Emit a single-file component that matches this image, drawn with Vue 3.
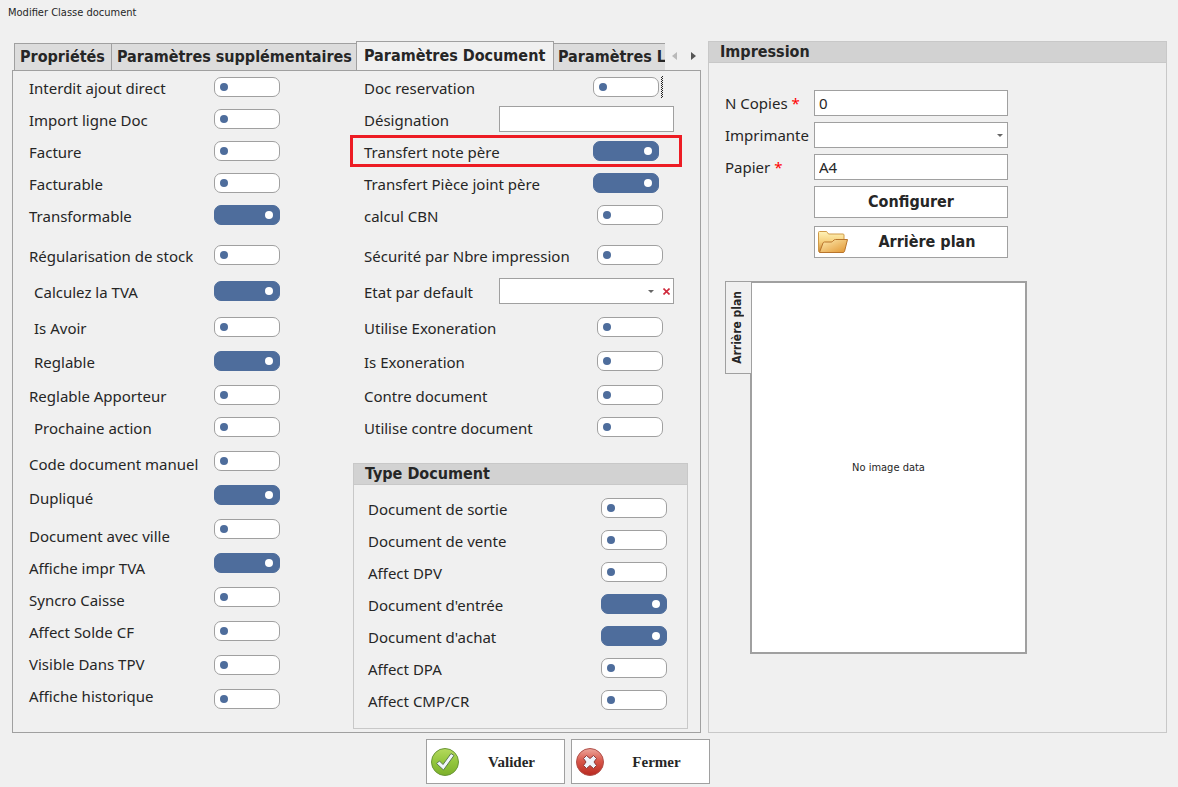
<script setup>
import { reactive } from 'vue'

const tabs = ['Propriétés', 'Paramètres supplémentaires', 'Paramètres Document', 'Paramètres L']
const activeTab = 'Paramètres Document'

const options = reactive([
  { label: 'Interdit ajout direct', on: false, labelGap: 0, gap: 0 },
  { label: 'Import ligne Doc', on: false, labelGap: 12, gap: 12 },
  { label: 'Facture', on: false, labelGap: 12, gap: 12 },
  { label: 'Facturable', on: false, labelGap: 12, gap: 12 },
  { label: 'Transformable', on: true, labelGap: 12, gap: 12 },
  { label: 'Régularisation de stock', on: false, labelGap: 20, gap: 20 },
  { label: 'Calculez la TVA', on: true, labelGap: 16, gap: 16, indent: true },
  { label: 'Is Avoir', on: false, labelGap: 16, gap: 16, indent: true },
  { label: 'Reglable', on: true, labelGap: 14, gap: 14, indent: true },
  { label: 'Reglable Apporteur', on: false, labelGap: 14, gap: 14 },
  { label: 'Prochaine action', on: false, labelGap: 12, gap: 12, indent: true },
  { label: 'Code document manuel', on: false, labelGap: 16, gap: 14 },
  { label: 'Dupliqué', on: true, labelGap: 14, gap: 14 },
  { label: 'Document avec ville', on: false, labelGap: 18, gap: 14 },
  { label: 'Affiche impr TVA', on: true, labelGap: 12, gap: 14 },
  { label: 'Syncro Caisse', on: false, labelGap: 12, gap: 14 },
  { label: 'Affect Solde CF', on: false, labelGap: 12, gap: 14 },
  { label: 'Visible Dans TPV', on: false, labelGap: 12, gap: 14 },
  { label: 'Affiche historique', on: false, labelGap: 12, gap: 14 },
])

const settings = reactive([
  { label: 'Doc reservation', kind: 'toggle', on: false, gap: 0, inset: true, focus: true },
  { label: 'Désignation', kind: 'text', gap: 0 },
  { label: 'Transfert note père', kind: 'toggle', on: true, gap: 0, inset: true, marked: true },
  { label: 'Transfert Pièce joint père', kind: 'toggle', on: true, gap: 0, inset: true },
  { label: 'calcul CBN', kind: 'toggle', on: false, gap: 0 },
  { label: 'Sécurité par Nbre impression', kind: 'toggle', on: false, gap: 8 },
  { label: 'Etat par default', kind: 'select', gap: 4 },
  { label: 'Utilise Exoneration', kind: 'toggle', on: false, gap: 4 },
  { label: 'Is Exoneration', kind: 'toggle', on: false, gap: 2 },
  { label: 'Contre document', kind: 'toggle', on: false, gap: 2 },
  { label: 'Utilise contre document', kind: 'toggle', on: false, gap: 0 },
])

const types = reactive([
  { label: 'Document de sortie', on: false },
  { label: 'Document de vente', on: false },
  { label: 'Affect DPV', on: false },
  { label: "Document d'entrée", on: true },
  { label: "Document d'achat", on: true },
  { label: 'Affect DPA', on: false },
  { label: 'Affect CMP/CR', on: false },
])
</script>

<template>
  <div class="window">
    <h1 class="title">Modifier Classe document</h1>

    <main class="columns">
      <section class="left">
        <div class="tabs" role="tablist">
          <button
            v-for="tab in tabs"
            :key="tab"
            type="button"
            role="tab"
            class="tab"
            :class="{ active: tab === activeTab }"
            :aria-selected="tab === activeTab"
          >{{ tab }}</button>
          <div class="scroll">
            <button type="button" class="arrow" aria-label="Onglets précédents">
              <svg width="5" height="8" viewBox="0 0 5 8"><path d="M5 0v8L0 4z" fill="#b9b9b9" /></svg>
            </button>
            <button type="button" class="arrow" aria-label="Onglets suivants">
              <svg width="5" height="8" viewBox="0 0 5 8"><path d="M0 0v8l5-4z" fill="#555" /></svg>
            </button>
          </div>
        </div>

        <div class="panel">
          <div class="names">
            <label
              v-for="(o, i) in options"
              :key="o.label"
              :for="'opt' + i"
              :class="['g' + o.labelGap, { indent: o.indent }]"
            >{{ o.label }}</label>
          </div>
          <div class="switches">
            <input
              v-for="(o, i) in options"
              :id="'opt' + i"
              :key="o.label"
              v-model="o.on"
              type="checkbox"
              role="switch"
              class="switch"
              :class="'g' + o.gap"
            />
          </div>

          <div class="second">
            <div class="settings">
              <div
                v-for="(s, i) in settings"
                :key="s.label"
                class="row"
                :class="['g' + s.gap, s.kind, { inset: s.inset, marked: s.marked, focus: s.focus }]"
              >
                <label :for="'set' + i">{{ s.label }}</label>
                <input v-if="s.kind === 'toggle'" :id="'set' + i" v-model="s.on" type="checkbox" role="switch" class="switch" />
                <input v-else-if="s.kind === 'text'" :id="'set' + i" type="text" class="field" />
                <div v-else class="combo">
                  <select :id="'set' + i" class="field"></select>
                  <svg class="caret" width="6" height="3" viewBox="0 0 6 3"><path d="M0 0h6L3 3z" fill="#666" /></svg>
                  <button type="button" class="clear" aria-label="Effacer">
                    <svg width="7" height="7" viewBox="0 0 7 7"><path d="M.5 .5l6 6M6.500 .5l-6 6" stroke="#cf2a3c" stroke-width="1.600" /></svg>
                  </button>
                </div>
              </div>
            </div>

            <section class="group types">
              <h2>Type Document</h2>
              <div class="type-rows">
                <div v-for="(t, i) in types" :key="t.label" class="row">
                  <label :for="'type' + i">{{ t.label }}</label>
                  <input :id="'type' + i" v-model="t.on" type="checkbox" role="switch" class="switch" />
                </div>
              </div>
            </section>
          </div>
        </div>
      </section>

      <section class="group print">
        <h2>Impression</h2>
        <div class="form">
          <label for="copies">N Copies <span class="req">*</span></label>
          <input id="copies" type="text" class="field" value="0" />
          <label for="printer">Imprimante</label>
          <div class="combo">
            <select id="printer" class="field"></select>
            <svg class="caret" width="6" height="3" viewBox="0 0 6 3"><path d="M0 0h6L3 3z" fill="#666" /></svg>
          </div>
          <label for="paper">Papier <span class="req">*</span></label>
          <input id="paper" type="text" class="field" value="A4" />
          <button type="button" class="action">Configurer</button>
          <button type="button" class="action with-icon">
            <svg width="32" height="24" viewBox="0 0 32 24">
              <defs>
                <linearGradient id="fback" x1="0" y1="0" x2="0" y2="1">
                  <stop offset="0" stop-color="#fff3b8" /><stop offset="0.500" stop-color="#f6cf7c" /><stop offset="1" stop-color="#c98532" />
                </linearGradient>
                <linearGradient id="ffront" x1="0" y1="0" x2="1" y2="1">
                  <stop offset="0" stop-color="#ffedb2" /><stop offset="1" stop-color="#e09430" />
                </linearGradient>
              </defs>
              <path d="M1.500 21V2.500Q1.500 1.500 2.500 1.500H9Q10 1.500 10.500 2.500L11.500 4H26Q27 4 27 5V10L25 22H2Z" fill="url(#fback)" stroke="#d09a48" />
              <path d="M2.500 22.500L6 13Q6.500 12 7.500 12H14Q15 12 15.500 11.500L17 10Q17.500 9.500 18.500 9.500H30.500L27.500 21.500Q27 22.500 26 22.500Z" fill="url(#ffront)" stroke="#b8742c" />
            </svg>
            <span>Arrière plan</span>
          </button>
        </div>
        <div class="preview">
          <button type="button" class="side-tab"><span>Arrière plan</span></button>
          <div class="image">No image data</div>
        </div>
      </section>
    </main>

    <footer class="footer">
      <button type="button" class="command">
        <svg width="28" height="28" viewBox="0 0 28 28">
          <defs>
            <linearGradient id="ok" x1="0" y1="0" x2="0" y2="1">
              <stop offset="0" stop-color="#b4d95e" /><stop offset="0.500" stop-color="#93c63c" /><stop offset="1" stop-color="#7cb02a" />
            </linearGradient>
          </defs>
          <circle cx="14" cy="14" r="13.500" fill="url(#ok)" stroke="#6a9638" />
          <path d="M5.500 15.500L8.500 13L12 16.500L20 5.500L23 7.500L12.500 22Z" fill="#f0f5fb" stroke="#5c7a50" stroke-linejoin="round" />
        </svg>
        <span>Valider</span>
      </button>
      <button type="button" class="command">
        <svg width="28" height="28" viewBox="0 0 28 28">
          <defs>
            <linearGradient id="no" x1="0" y1="0" x2="0" y2="1">
              <stop offset="0" stop-color="#eda79c" /><stop offset="0.450" stop-color="#d9594c" /><stop offset="1" stop-color="#b8281f" />
            </linearGradient>
          </defs>
          <circle cx="14" cy="14" r="13.500" fill="url(#no)" stroke="#b0504a" />
          <path d="M10.500 7.500L14 10.500L17.500 7.500L20.500 10.500L18 14L20.500 17.500L17.500 20.500L14 17.500L10.500 20.500L7.500 17.500L10 14L7.500 10.500Z" fill="#eef3fa" stroke="#8c3a38" stroke-linejoin="round" />
        </svg>
        <span>Fermer</span>
      </button>
    </footer>
  </div>
</template>

<style>
body {
  margin: 0;
  background: #f0f0f0;
}
</style>

<style scoped>
.window {
  box-sizing: border-box;
  padding-bottom: 3px;
  color: #262626;
  font-family: "Noto Sans", sans-serif;
  font-size: 15px;
  line-height: 20px;
}
.window * {
  box-sizing: border-box;
}
button,
input,
select {
  margin: 0;
  padding: 0;
  color: inherit;
  font: inherit;
}
svg {
  display: block;
  flex: none;
}
.title {
  margin: 0;
  padding: 3px 8px 18px;
  font-size: 11px;
  font-weight: 400;
  line-height: 20px;
}
.title,
.image {
  font-family: "DejaVu Sans Condensed", "Noto Sans", sans-serif;
}
.columns {
  display: grid;
  grid-template-columns: minmax(0, 689fr) minmax(0, 459fr);
  gap: 7px;
  padding: 0 11px 0 12px;
}
.left {
  display: flex;
  flex-direction: column;
}
.tabs {
  display: grid;
  grid-template-columns: minmax(0, 97fr) minmax(0, 245fr) minmax(0, 198fr) minmax(0, 111fr) 36px;
  align-items: end;
  height: 30px;
  padding-left: 2px;
  margin-bottom: -1px;
}
.tab,
.group h2,
.action,
.side-tab {
  font-family: "DejaVu Sans Condensed", "Noto Sans", sans-serif;
  font-weight: 700;
}
.tab {
  height: 28px;
  overflow: hidden;
  padding: 0 0 0 5px;
  border: 1px solid #a0a0a0;
  border-right-width: 0;
  background: #dcdcdc;
  font-size: 16px;
  text-align: left;
  white-space: nowrap;
}
.tab.active {
  height: 30px;
  border-right-width: 1px;
  border-bottom-color: #f0f0f0;
  background: #f0f0f0;
  padding-left: 7px;
}
.tab.active + .tab {
  padding-left: 4px;
  border-left-width: 0;
}
.scroll {
  display: flex;
  align-self: center;
  justify-content: space-between;
  padding: 0 5px 0 7px;
}
.arrow {
  border: 0;
  background: none;
}
.panel {
  display: grid;
  flex: 1;
  grid-template-columns: minmax(0, 201fr) 66px minmax(0, 70fr) minmax(0, 350fr);
  border: 1px solid #a0a0a0;
}
.names,
.switches {
  display: flex;
  flex-direction: column;
}
.names {
  padding: 7px 0 0 16px;
  white-space: nowrap;
}
.indent {
  padding-left: 5px;
}
.switches {
  padding-top: 6px;
}
.g2 { margin-top: 2px; }
.g4 { margin-top: 4px; }
.g8 { margin-top: 8px; }
.g12 { margin-top: 12px; }
.g14 { margin-top: 14px; }
.g16 { margin-top: 16px; }
.g18 { margin-top: 18px; }
.g20 { margin-top: 20px; }
.switch {
  display: flex;
  flex: none;
  align-items: center;
  width: 66px;
  height: 20px;
  padding: 0 5px;
  border: 1px solid #a0a0a0;
  border-radius: 7px;
  background: #fff;
  appearance: none;
}
.switch::before {
  width: 8px;
  height: 8px;
  border-radius: 50%;
  background: #4e6d9c;
  content: "";
}
.switch:checked {
  justify-content: flex-end;
  padding-right: 6px;
  border-color: #4e6d9c;
  background: #4e6d9c;
}
.switch:checked::before {
  background: #fff;
}
.second {
  grid-column: 4;
  display: flex;
  flex-direction: column;
}
.settings {
  margin-right: 18px;
}
.row {
  display: flex;
  position: relative;
  align-items: center;
  justify-content: space-between;
  height: 32px;
  white-space: nowrap;
}
.row label {
  padding-top: 2px;
}
.settings .row {
  padding: 0 19px 0 14px;
}
.settings .row.inset {
  padding-right: 23px;
}
.settings .row.text,
.settings .row.select {
  padding-right: 8px;
}
.row.focus::after {
  position: absolute;
  top: 5px;
  right: 19px;
  width: 2px;
  height: 22px;
  background: repeating-conic-gradient(#222 0 25%, transparent 0 50%) 0 0 / 2px 2px;
  content: "";
}
.row.marked::before {
  position: absolute;
  inset: 0;
  border: 3px solid #ed1c24;
  content: "";
  pointer-events: none;
}
.settings .field {
  width: 175px;
}
.field {
  display: block;
  width: 100%;
  height: 26px;
  padding: 0 4px;
  border: 1px solid #a0a0a0;
  border-radius: 0;
  background: #fff;
  appearance: none;
}
.combo {
  position: relative;
}
.caret {
  position: absolute;
  top: 12px;
  right: 5px;
}
.settings .caret {
  right: 20px;
}
.clear {
  position: absolute;
  top: 10px;
  right: 4px;
  border: 0;
  background: none;
}
.group {
  border: 1px solid #c8c8c8;
}
.group h2 {
  height: 21px;
  margin: 0;
  padding-left: 11px;
  border-bottom: 1px solid #c8c8c8;
  background: #d2d2d2;
  font-size: 16px;
  line-height: 20px;
}
.types {
  margin: 20px 12px 3px 3px;
}
.type-rows {
  padding: 7px 20px 12px 14px;
}
.form {
  display: grid;
  grid-template-columns: minmax(0, 89fr) minmax(0, 194fr) minmax(0, 158fr);
  align-items: center;
  row-gap: 6px;
  padding: 27px 0 0 16px;
  white-space: nowrap;
}
.form > label {
  grid-column: 1;
}
.form > input,
.form > button,
.form > .combo {
  grid-column: 2;
}
.req {
  color: #f00;
}
.action {
  height: 32px;
  border: 1px solid #a0a0a0;
  background: #fff;
  font-size: 16px;
}
.with-icon {
  display: flex;
  align-items: center;
  margin-top: 2px;
  padding: 0 2px;
}
.with-icon span {
  flex: 1;
}
.preview {
  display: grid;
  grid-template-columns: 25px minmax(0, 277fr) minmax(0, 139fr);
  align-items: start;
  padding: 23px 0 0 16px;
}
.side-tab {
  position: relative;
  display: flex;
  align-items: center;
  justify-content: center;
  width: 27px;
  height: 93px;
  padding-right: 4px;
  border: 1px solid #a0a0a0;
  background: #f0f0f0;
  font-size: 12px;
}
.side-tab span {
  writing-mode: vertical-rl;
  transform: rotate(180deg);
}
.image {
  display: flex;
  align-items: center;
  justify-content: center;
  height: 373px;
  border: 2px solid #a0a0a0;
  background: #fff;
  font-size: 11px;
}
.footer {
  display: grid;
  grid-template-columns: 426fr 139fr 6px 139fr 468fr;
  padding-top: 6px;
}
.command {
  display: flex;
  grid-column: 2;
  align-items: center;
  height: 45px;
  padding: 0 0 0 4px;
  border: 1px solid #a0a0a0;
  background: #fff;
  font-family: "Liberation Serif", serif;
  font-size: 15px;
  font-weight: 700;
}
.command + .command {
  grid-column: 4;
}
.command span {
  flex: 1;
}
</style>
